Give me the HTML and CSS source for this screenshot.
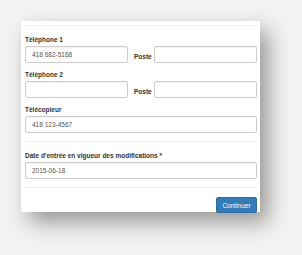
FILE: index.html
```html
<!DOCTYPE html>
<html lang="fr">
<head>
    <meta charset="UTF-8">
    <meta name="viewport" content="width=device-width, initial-scale=1.0">
    <title>Coordonnées</title>
    <link rel="stylesheet" href="styles.css">
</head>
<body>
    <div class="card">
        <hr class="sep sep-top">

        <!-- Phones -->
        <div class="form-group">
            <label for="tel1">Téléphone 1</label>
            <div class="phone-row">
                <input type="text" id="tel1" value="418 682-5168">
                <label for="poste1" class="poste">Poste</label>
                <input type="text" id="poste1">
            </div>
        </div>
        <div class="form-group">
            <label for="tel2">Téléphone 2</label>
            <div class="phone-row">
                <input type="text" id="tel2">
                <label for="poste2" class="poste">Poste</label>
                <input type="text" id="poste2">
            </div>
        </div>
        <div class="form-group">
            <label for="fax">Télécopieur</label>
            <input type="text" id="fax" value="418 123-4567">
        </div>

        <hr class="sep">

        <div class="form-group">
            <label for="date">Date d'entrée en vigueur des modifications *</label>
            <input type="text" id="date" value="2015-06-18">
        </div>

        <hr class="sep">

        <div class="actions">
            <button type="button">Continuer</button>
        </div>
    </div>
</body>
</html>
```

FILE: styles.css
```css
* {
    margin: 0;
    padding: 0;
    box-sizing: border-box;
}

body {
    font-family: "Liberation Sans", Arial, sans-serif;
    background-color: #f2f3f0;
    color: #333;
    width: 302px;
    height: 255px;
    overflow: hidden;
}

.card {
    margin: 21px 0 0 21px;
    width: 239px;
    height: 191px;
    background: white;
    padding: 4px 3px 0 4px;
    box-shadow: 8px 10px 20px rgba(0, 0, 0, 0.38);
}

.sep {
    border: none;
    border-top: 1px solid #f0f0f0;
}

.form-group {
    margin-top: 9px;
}

.form-group + .form-group {
    margin-top: 7px;
}

label {
    display: block;
    font-size: 6.5px;
    font-weight: bold;
    line-height: 9px;
    margin-bottom: 2px;
}

input {
    display: block;
    width: 100%;
    height: 17px;
    padding: 0 6px;
    font-family: inherit;
    font-size: 6.5px;
    color: #555;
    border: 1px solid #ccc;
    border-radius: 2px;
    box-shadow: inset 0 1px 1px rgba(0, 0, 0, 0.05);
}

.phone-row {
    display: grid;
    grid-template-columns: 103px 1fr 103px;
    align-items: center;
}

.poste {
    margin: 3px 0 0 6px;
}

.sep + .form-group {
    margin-top: 9px;
}

.form-group + .sep {
    margin-top: 8px;
}

.actions {
    display: flex;
    justify-content: flex-end;
    margin-top: 9px;
}

button {
    width: 41px;
    height: 16px;
    font-family: inherit;
    font-size: 6.5px;
    color: white;
    background-color: #337ab7;
    border: 1px solid #2e6da4;
    border-radius: 2px;
    cursor: pointer;
}
```
